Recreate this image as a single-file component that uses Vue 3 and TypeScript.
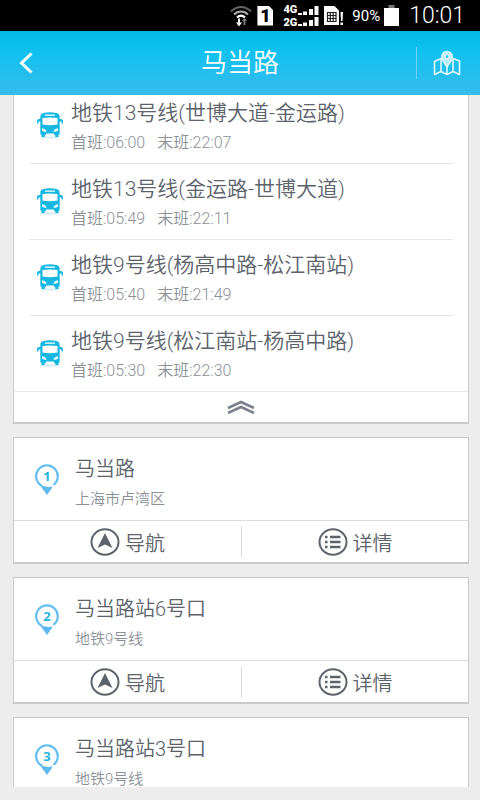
<script setup lang="ts">
interface Route {
  name: string
  first: string
  last: string
}

interface Place {
  name: string
  address: string
  hasActions: boolean
}

const routes: Route[] = [
  { name: '地铁13号线(世博大道-金运路)', first: '06:00', last: '22:07' },
  { name: '地铁13号线(金运路-世博大道)', first: '05:49', last: '22:11' },
  { name: '地铁9号线(杨高中路-松江南站)', first: '05:40', last: '21:49' },
  { name: '地铁9号线(松江南站-杨高中路)', first: '05:30', last: '22:30' },
]

const places: Place[] = [
  { name: '马当路', address: '上海市卢湾区', hasActions: true },
  { name: '马当路站6号口', address: '地铁9号线', hasActions: true },
  { name: '马当路站3号口', address: '地铁9号线', hasActions: false },
]
</script>

<template>
  <div class="page">
    <div class="status">
      <svg class="wifi" width="22" height="22" viewBox="0 0 22 22" fill="none">
        <path d="M1 6.500C7 .5 15 .5 21 6.500" stroke="#666" stroke-width="2" />
        <path d="M4 9.500C8 5.500 14 5.500 18 9.500" stroke="#aaa" stroke-width="2" />
        <path d="M7 12.500C9.500 10 12.500 10 15 12.500" stroke="#fff" stroke-width="2.200" />
        <path d="M8 13.500v4H6l3 4 3-4h-2v-4z" fill="#fff" />
        <path d="M13.500 20v-4h-1.500l2.500-3.500 2.500 3.500h-1.500v4z" fill="#777" />
      </svg>
      <span class="sim-slot">1</span>
      <div class="networks">
        <span>4G</span>
        <span>2G</span>
      </div>
      <svg class="signals" width="21" height="22" viewBox="0 0 21 22" fill="#fff">
        <path d="M0 8h4v2H0zM5 6.500h4V10H5zM11 4h4v6h-4zM16.500 1h4v9h-4zM0 19h4v2H0zM5 17.500h4V21H5zM11 15h4v6h-4zM16.500 12h4v9h-4z" />
      </svg>
      <svg class="card-alert" width="20" height="20" viewBox="0 0 20 20">
        <path d="M0 0h10.500L15 4.500V19H0z" fill="#fff" />
        <path d="M3.500 6.500h8.500v9H3.500zM3.500 9.500H12M3.500 12.500H12M6.300 6.500v9M9.200 6.500v9" fill="none" stroke="#222" stroke-width="1.200" />
        <path d="M16.500 6h2.500l-.5 9h-1.500zM16.500 16.500H19V19h-2.500z" fill="#fff" />
      </svg>
      <span class="percent">90%</span>
      <svg class="battery" width="15" height="21" viewBox="0 0 15 21">
        <path d="M4.500 0h6v3h-6z" fill="#777" />
        <path d="M0 3h15v18H0z" fill="#fff" />
      </svg>
      <span class="clock">10:01</span>
    </div>

    <header class="bar">
      <button class="icon-button back" type="button" aria-label="返回">
        <svg width="14" height="22" viewBox="0 0 14 22" fill="none" stroke="#f4fdff" stroke-width="3">
          <path d="M12.500 1.500 2.500 11l10 9.500" />
        </svg>
      </button>
      <h1>马当路</h1>
      <button class="icon-button map" type="button" aria-label="地图">
        <svg width="28" height="26" viewBox="0 0 28 26" fill="none" stroke="#e2f8ff" stroke-width="1.600" stroke-linejoin="round">
          <path d="M8.500 8.700 8 8.500 1.500 11.500V24.500L8 21.500l6 3 6-3 6.500 3V11L20 8.500M8 8.500v13M14 17v7.500M20 8.500v13" />
          <path d="M14 17C12 13 8.800 10.500 8.800 6.700a5.200 5.200 0 0 1 10.400 0C19.200 10.500 16 13 14 17z" fill="#b5ebfc" />
          <circle cx="14" cy="6.700" r="2.200" fill="#25bdec" />
        </svg>
      </button>
    </header>

    <main class="list">
      <section class="card routes">
        <ul>
          <li v-for="route in routes" :key="route.name" class="route">
            <svg class="bus" width="26" height="27" viewBox="0 0 26 27">
              <path d="M4 24.500h18v2H4z" fill="#d5edf4" />
              <path
                fill="#16b8e2"
                fill-rule="evenodd"
                d="M6.500 1Q13-.6 19.500 1 22.500 1.800 22.700 4.500V7H24q2 0 2 2v2.500h-1.500V9.500h-1.800V22l-1.200 1V25h-3.200v-2H7.700v2H4.500v-2L3.300 22V9.500H1.500v2H0V9Q0 7 2 7h1.300V4.500Q3.500 1.800 6.500 1zM8 2.500v1.300h10V2.500zM5.500 6v6.500Q13 14 20.500 12.500V6Q13 5 5.500 6zM5 16.200v2.200q2 1.600 4.500 1.300-.5-2.700-4.500-3.500zM21 16.200q-4 .8-4.500 3.500 2.500.3 4.500-1.300zM9 21.500h8v1.500H9z"
              />
            </svg>
            <div class="route-text">
              <h2>{{ route.name }}</h2>
              <p class="times">
                <span>首班:{{ route.first }}</span>
                <span>末班:{{ route.last }}</span>
              </p>
            </div>
          </li>
        </ul>
        <button class="collapse" type="button" aria-label="收起">
          <svg width="28" height="14" viewBox="0 0 28 14" fill="none" stroke="#7b818b" stroke-width="2.600">
            <path d="M1 8 14 2l13 6M1 13l13-6 13 6" />
          </svg>
        </button>
      </section>

      <article v-for="(place, index) in places" :key="place.name" class="card place">
        <div class="summary">
          <div class="pin">
            <svg width="24" height="31" viewBox="0 0 24 31">
              <path d="M7 21.800A10.800 10.800 0 1 1 18.500 20.800" fill="none" stroke="#66bff3" stroke-width="2.200" />
              <path d="M4.500 20.500Q11 24 17 22.500V24L12 31z" fill="#5fb9f0" />
            </svg>
            <span>{{ index + 1 }}</span>
          </div>
          <div class="place-text">
            <h2>{{ place.name }}</h2>
            <p>{{ place.address }}</p>
          </div>
        </div>
        <div v-if="place.hasActions" class="actions">
          <button type="button">
            <svg width="30" height="28" viewBox="0 0 30 28">
              <ellipse cx="15" cy="14" rx="13.500" ry="12.800" fill="none" stroke="#5c636b" stroke-width="2" />
              <path d="M15 5 22.500 20 15 16.500 7.500 20z" fill="#5c636b" />
            </svg>
            导航
          </button>
          <button type="button">
            <svg width="30" height="28" viewBox="0 0 30 28" fill="none" stroke="#5c636b">
              <ellipse cx="15" cy="14" rx="13.500" ry="12.800" stroke-width="2" />
              <path d="M7 9h2.500M7 14h2.500M7 19h2.500M12 9h10.500M12 14h10.500M12 19h10.500" stroke-width="2.300" />
            </svg>
            详情
          </button>
        </div>
      </article>
    </main>
  </div>
</template>

<style>
body {
  margin: 0;
  background: #ededed;
}
</style>

<style scoped>
.page {
  box-sizing: border-box;
  display: flex;
  flex-direction: column;
  height: 100vh;
  padding-bottom: 13px;
  background: #ededed;
  font-family: Roboto, 'Noto Sans CJK SC', sans-serif;
  font-weight: 350;
  color: #5c636b;
}

h1,
h2,
p,
ul {
  margin: 0;
  padding: 0;
  font-weight: 350;
}

button {
  padding: 0;
  border: 0;
  background: none;
  color: inherit;
  font: inherit;
  cursor: pointer;
}

svg {
  display: block;
  flex: none;
}

.status {
  display: flex;
  flex: none;
  align-items: center;
  justify-content: flex-end;
  height: 31px;
  padding-right: 15px;
  background: #000;
  color: #fff;
}

.sim-slot {
  width: 16px;
  margin-left: 5px;
  background: #fff;
  clip-path: polygon(0 0, 70% 0, 100% 25%, 100% 100%, 0 100%);
  color: #000;
  font-size: 18px;
  font-weight: 900;
  line-height: 20px;
  text-align: center;
}

.networks {
  display: flex;
  flex-direction: column;
  margin-left: 10px;
  font-size: 11px;
  font-weight: 900;
  line-height: 13px;
}

.signals {
  margin-left: 1px;
}

.card-alert {
  margin-left: 5px;
}

.percent {
  margin-left: 8px;
  font-size: 15px;
  font-weight: 400;
}

.battery {
  margin-left: 4px;
}

.clock {
  margin-left: 10px;
  font-size: 23px;
}

.bar {
  display: grid;
  flex: none;
  grid-template-columns: 64px 1fr 64px;
  align-items: center;
  height: 64px;
  background: linear-gradient(#05b8e2, #0fc1ee 30%, #37bbed);
  color: #fff;
}

.bar h1 {
  font-size: 26px;
  line-height: 32px;
  text-align: center;
}

.icon-button {
  display: flex;
  align-items: center;
  height: 32px;
}

.back {
  padding-left: 19px;
}

.map {
  justify-content: center;
  padding-right: 4px;
  border-left: 1px solid #6dd2f4;
}

.list {
  flex: 1;
  min-height: 0;
  padding: 0 11px 0 13px;
  overflow-y: auto;
  scrollbar-width: none;
}

.card {
  box-sizing: border-box;
  margin-bottom: 13px;
  border: 1px solid #cacaca;
  border-bottom-width: 2px;
  background: #fff;
}

/* The first row rests partly under the title bar. */
.routes {
  margin-top: -7px;
  border-top: 0;
}

.route {
  display: flex;
  align-items: center;
  gap: 8px;
  box-sizing: border-box;
  height: 76px;
  margin: 0 15px;
  padding-left: 8px;
  border-bottom: 1px solid #e6e6e6;
}

.route:last-child {
  margin: 0;
  padding-left: 23px;
}

.route-text {
  padding-top: 3px;
}

.route h2 {
  font-size: 21px;
  line-height: 32px;
}

.times {
  display: flex;
  gap: 12px;
  color: #8c9198;
  font-size: 16px;
  line-height: 28px;
}

.collapse {
  display: flex;
  align-items: center;
  justify-content: center;
  width: 100%;
  height: 30px;
}

.summary {
  display: flex;
  align-items: center;
  gap: 16px;
  box-sizing: border-box;
  height: 83px;
  padding-left: 21px;
  border-bottom: 1px solid #dcdcdc;
}

.pin {
  display: grid;
}

.pin svg,
.pin span {
  grid-area: 1 / 1;
}

.pin span {
  color: #1fb5dd;
  font-family: 'Open Sans', sans-serif;
  font-size: 13px;
  font-weight: 700;
  line-height: 24px;
  text-align: center;
}

.place-text {
  padding-top: 8px;
}

.place-text h2 {
  font-size: 20px;
  line-height: 32px;
}

.place-text p {
  color: #8c9198;
  font-size: 15px;
  line-height: 28px;
}

.actions {
  display: grid;
  grid-template-columns: 1fr 1fr;
  padding: 5px 0 4px;
}

.actions button {
  display: flex;
  align-items: center;
  justify-content: center;
  gap: 5px;
  height: 32px;
  font-size: 20px;
}

.actions button + button {
  border-left: 1px solid #dcdcdc;
}
</style>
